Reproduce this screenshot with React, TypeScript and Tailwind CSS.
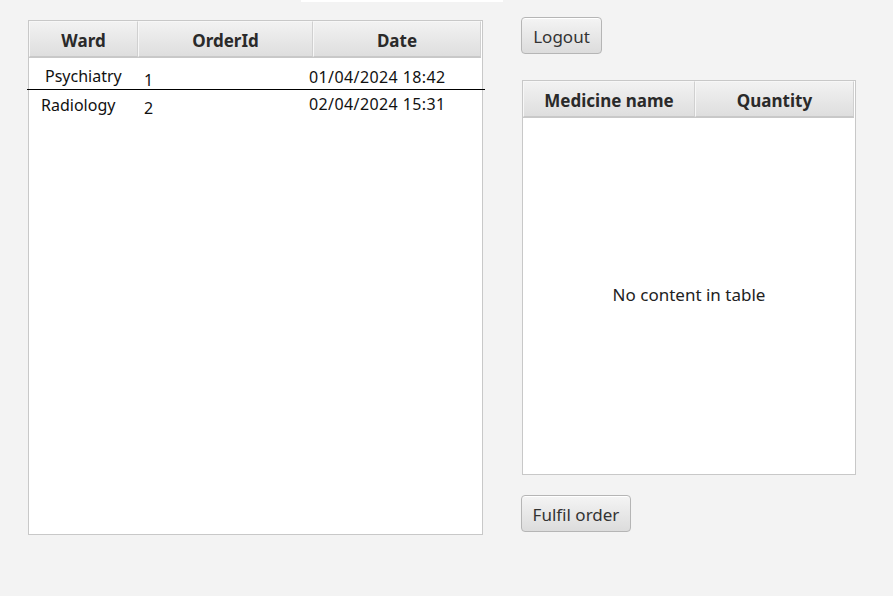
const font = { fontFamily: '"Noto Sans", "Open Sans", sans-serif' };

function HeaderCell({ label, className }: { label: string; className: string }) {
  return (
    <div
      className={`flex items-center justify-center h-full pt-[3px] border border-[#f7f7f7] border-r-[#d0d0d0] border-b-[#c8c8c8] bg-gradient-to-b from-[#f2f2f2] to-[#dedede] text-[17px] font-bold text-[#2a2a2a] ${className}`}
    >
      {label}
    </div>
  );
}

function Button({ label, className }: { label: string; className: string }) {
  return (
    <button
      className={`h-[37px] pt-[2px] rounded-[4px] border border-[#b5b5b5] bg-gradient-to-b from-[#f4f4f4] to-[#dcdcdc] text-[17px] text-[#333] shadow-[inset_0_1px_0_#ffffff] ${className}`}
    >
      {label}
    </button>
  );
}

export default function App() {
  return (
    <div
      className="relative w-[893px] h-[596px] bg-[#f3f3f3] flex items-start pt-[17px] pl-[28px] gap-[38px] overflow-hidden"
      style={font}
    >
      <div className="absolute top-0 left-[301px] w-[202px] h-[2px] bg-white" />

      {/* orders table */}
      <div className="relative mt-[3px] w-[455px] h-[515px] bg-white border border-[#c8c8c8] flex flex-col">
        <div className="flex h-[37px] w-[452px] border-b border-[#c8c8c8]">
          <HeaderCell label="Ward" className="w-[109px]" />
          <HeaderCell label="OrderId" className="w-[175px]" />
          <HeaderCell label="Date" className="w-[168px]" />
        </div>
        <div className="relative flex-1 text-[16px] text-[#111]">
          <div className="flex h-[31px] items-start">
            <span className="ml-[16px] mt-[6px] w-[99px]">Psychiatry</span>
            <span className="mt-[10px] w-[165px]">1</span>
            <span className="mt-[7px] tracking-[0.4px]">01/04/2024 18:42</span>
          </div>
          <div className="absolute top-[31px] -left-[2px] w-[458px] h-px bg-black" />
          <div className="flex h-[31px] items-start">
            <span className="ml-[12px] mt-[4px] w-[103px]">Radiology</span>
            <span className="mt-[7px] w-[165px]">2</span>
            <span className="mt-[3px] tracking-[0.4px]">02/04/2024 15:31</span>
          </div>
        </div>
      </div>

      {/* details */}
      <div className="flex flex-col items-start">
        <Button label="Logout" className="w-[81px]" />
        <div className="ml-[1px] mt-[26px] w-[334px] h-[395px] bg-white border border-[#c8c8c8] flex flex-col">
          <div className="flex h-[37px] w-[331px] border-b border-[#c8c8c8]">
            <HeaderCell label="Medicine name" className="w-[172px]" />
            <HeaderCell label="Quantity" className="w-[159px]" />
          </div>
          <div className="flex-1 flex items-center justify-center text-[17px] text-[#222] pb-[2px]">
            No content in table
          </div>
        </div>
        <Button label="Fulfil order" className="mt-[20px] w-[110px]" />
      </div>
    </div>
  );
}
